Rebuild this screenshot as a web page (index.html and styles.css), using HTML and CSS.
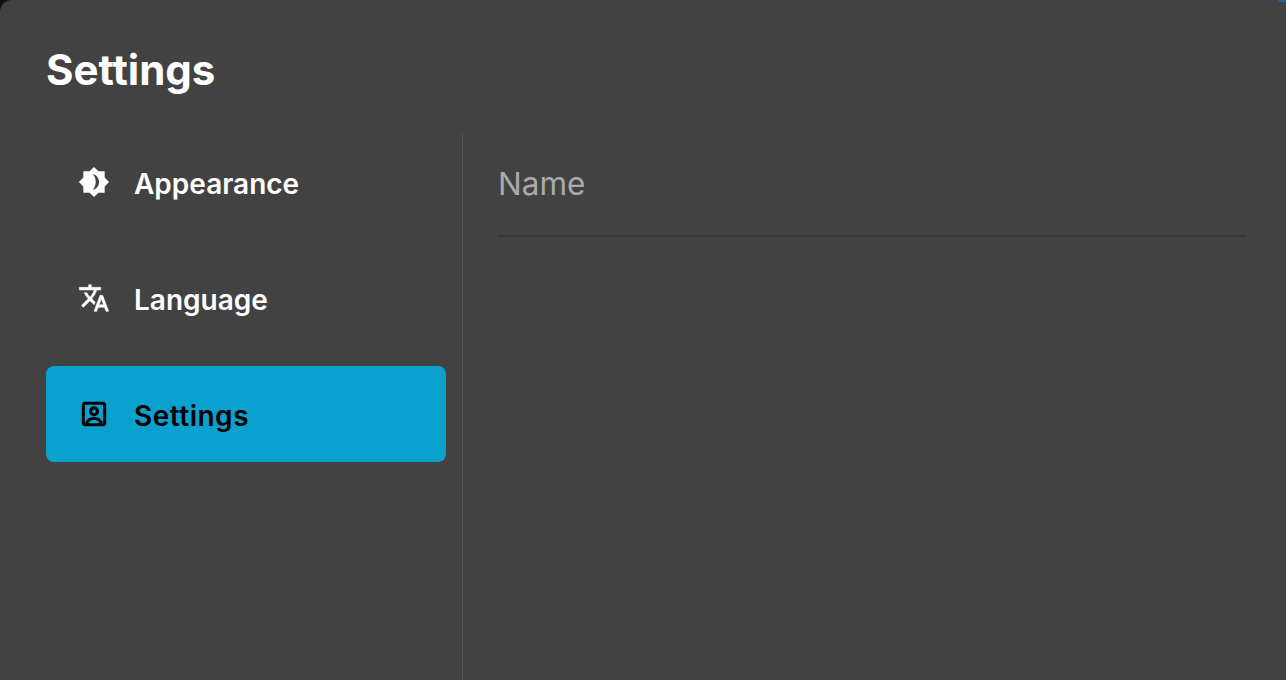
FILE: index.html
```html
<!DOCTYPE html>
<html lang="en">

<head>
    <meta charset="UTF-8">
    <meta name="viewport" content="width=device-width, initial-scale=1.0">
    <title>Settings</title>
    <link rel="stylesheet" href="styles.css">
</head>

<body>
    <div class="window">
        <div class="corner-glow"></div>
        <h1 class="title">Settings</h1>

        <div class="panes">
            <div class="sidebar">
                <div class="nav-item">
                    <svg class="nav-icon" viewBox="0 0 24 24">
                        <path fill-rule="evenodd" d="M20 8.69V4h-4.69L12 .69 8.69 4H4v4.69L.69 12 4 15.31V20h4.69L12 23.31 15.31 20H20v-4.69L23.31 12 20 8.69zM10.7 6C13.8 6.6 15.8 9 15.8 12S13.8 17.4 10.7 18C12.5 16.6 13.3 14.4 13.3 12S12.5 7.4 10.7 6z" />
                    </svg>
                    <span class="nav-label">Appearance</span>
                </div>
                <div class="nav-item">
                    <svg class="nav-icon nav-icon-bold" viewBox="0 0 24 24">
                        <path d="M12.87 15.07l-2.54-2.51.03-.03c1.74-1.94 2.98-4.17 3.71-6.53H17V4h-7V2H8v2H1v1.99h11.17C11.5 7.92 10.44 9.75 9 11.35 8.07 10.32 7.3 9.19 6.69 8h-2c.73 1.63 1.73 3.17 2.98 4.56l-5.09 5.02L4 19l5-5 3.11 3.11.76-2.04zM18.5 10h-2L12 22h2l1.12-3h4.75L21 22h2l-4.5-12zm-2.62 7l1.62-4.33L19.12 17h-3.24z" />
                    </svg>
                    <span class="nav-label">Language</span>
                </div>
                <div class="nav-item active">
                    <svg class="nav-icon nav-icon-line" viewBox="0 0 24 24">
                        <rect x="4" y="4" width="16" height="16" rx="1.5" />
                        <circle cx="12" cy="10" r="2.6" />
                        <path d="M6.5 19c1-2.6 3.2-3.8 5.5-3.8s4.500 1.200 5.500 3.800" />
                    </svg>
                    <span class="nav-label">Settings</span>
                </div>
            </div>

            <div class="content">
                <div class="field">Name</div>
            </div>
        </div>
    </div>
</body>

</html>
```

FILE: styles.css
```css
html,
body {
    height: 100%;
}

body {
    margin: 0;
    overflow: hidden;
    background-color: #111;
    font-family: "Inter", sans-serif;
}

.window {
    position: relative;
    box-sizing: border-box;
    height: 100%;
    padding: 0 40px 0 46px;
    display: flex;
    flex-direction: column;
    background-color: #424242;
    border-top-left-radius: 12px;
}

/* Sliver of the desktop behind the window */
.corner-glow {
    position: absolute;
    top: 0;
    right: 0;
    width: 8px;
    height: 2px;
    background-color: #0d6f8c;
}

.title {
    margin: 0;
    padding-top: 47px;
    height: 134px;
    box-sizing: border-box;
    font-size: 42px;
    line-height: 46px;
    font-weight: 700;
    color: #fff;
}

.panes {
    flex: 1;
    display: flex;
}

/* Left navigation */
.sidebar {
    width: 400px;
    padding-right: 16px;
    border-right: 1px solid #545454;
    display: flex;
    flex-direction: column;
    gap: 20px;
}

.nav-item {
    height: 96px;
    padding-left: 32px;
    display: flex;
    align-items: center;
    gap: 24px;
    border-radius: 8px;
    font-size: 28px;
    font-weight: 600;
    color: #fff;
}

.nav-item.active {
    background-color: #0ba1cf;
    color: #000;
    letter-spacing: 0.5px;
}

.nav-label {
    padding-top: 4px;
}

.nav-icon {
    width: 32px;
    height: 32px;
    fill: currentColor;
}

.nav-icon-bold {
    stroke: currentColor;
    stroke-width: 0.4;
}

.nav-icon-line {
    fill: none;
    stroke: currentColor;
    stroke-width: 2.3;
}

/* Right pane */
.content {
    flex: 1;
    padding-left: 35px;
}

.field {
    box-sizing: border-box;
    height: 103px;
    line-height: 100px;
    border-bottom: 2px solid #383838;
    font-size: 31.5px;
    color: #aaa;
}
```
